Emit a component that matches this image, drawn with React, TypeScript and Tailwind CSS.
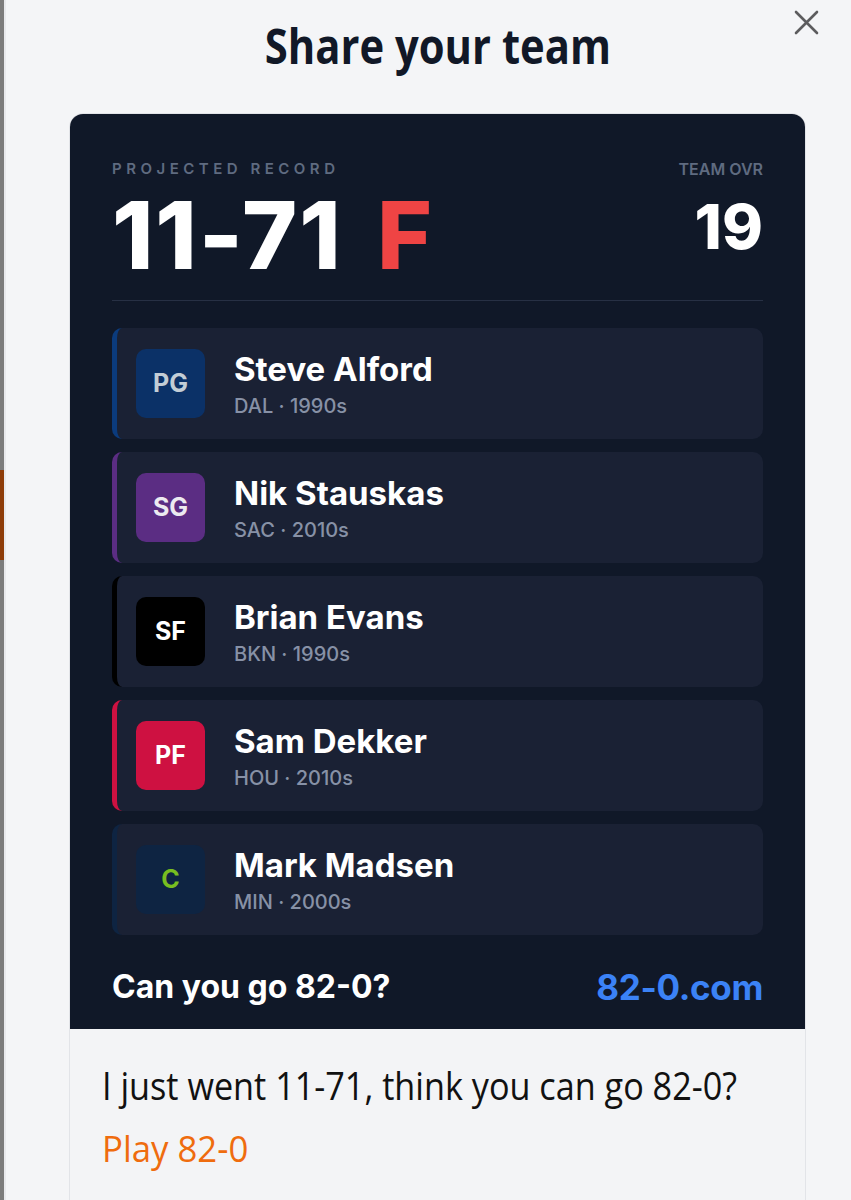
import * as React from "react"

type Player = {
  pos: string
  name: string
  team: string
  era: string
  accent: string
  badge: string
  label: string
}

const roster: Player[] = [
  { pos: "PG", name: "Steve Alford", team: "DAL", era: "1990s", accent: "border-[#0b3b7d]", badge: "bg-[#0b3167]", label: "text-[#c3cdd6]" },
  { pos: "SG", name: "Nik Stauskas", team: "SAC", era: "2010s", accent: "border-[#5b2d83]", badge: "bg-[#5b2d83]", label: "text-[#eceaf0]" },
  { pos: "SF", name: "Brian Evans", team: "BKN", era: "1990s", accent: "border-[#000000]", badge: "bg-[#000000]", label: "text-white" },
  { pos: "PF", name: "Sam Dekker", team: "HOU", era: "2010s", accent: "border-[#ce1141]", badge: "bg-[#ce1141]", label: "text-white" },
  { pos: "C", name: "Mark Madsen", team: "MIN", era: "2000s", accent: "border-[#0e2442]", badge: "bg-[#0e2442]", label: "text-[#78be20]" },
]

const inter = "font-['Inter','Liberation_Sans',sans-serif]"
const body = "font-['Open_Sans','Noto_Sans','Liberation_Sans',sans-serif]"

function PlayerRow({ player }: { player: Player }) {
  return (
    <div
      className={`flex h-[111px] items-center gap-[29px] rounded-[10px] border-l-[5px] bg-[#1a2134] pl-[19px] ${player.accent}`}
    >
      <div
        className={`grid size-[69px] flex-none place-content-center rounded-[10px] text-[25px] font-bold ${player.badge} ${player.label}`}
      >
        {player.pos}
      </div>
      <div className="flex flex-col">
        <div className="text-[33px] font-bold leading-[38px] text-white">
          {player.name}
        </div>
        <div className="mt-[6px] text-[20px] font-medium leading-[24px] text-[#8791a6]">
          {player.team} · {player.era}
        </div>
      </div>
    </div>
  )
}

function ShareCard() {
  return (
    <div className={`bg-[#101828] px-[42px] ${inter}`}>
      <div className="flex items-start justify-between border-b border-[#273044] pb-[26px] pt-[47px]">
        <div>
          <div className="text-[15px] font-semibold leading-none tracking-[0.3em] text-[#5f6b80]">
            PROJECTED RECORD
          </div>
          <div className="mt-[20px] text-[94px] font-extrabold leading-[78px] tracking-[0.02em] text-white">
            11-71 <span className="ml-[12px] text-[#ef4444]">F</span>
          </div>
        </div>
        <div className="flex flex-col items-end">
          <div className="text-[16px] font-semibold leading-none text-[#5f6b80]">
            TEAM OVR
          </div>
          <div className="mt-[22px] text-[62px] font-extrabold leading-[56px] text-white">
            19
          </div>
        </div>
      </div>

      <div className="mt-[27px] flex flex-col gap-[13px]">
        {roster.map((p) => (
          <PlayerRow key={p.pos} player={p} />
        ))}
      </div>

      <div className="flex h-[94px] items-center justify-between pt-[10px]">
        <span className="text-[32px] font-bold text-white">
          Can you go 82-0?
        </span>
        <span className="text-[35px] font-bold tracking-[-0.01em] text-[#3b82f6]">
          82-0.com
        </span>
      </div>
    </div>
  )
}

export default function App() {
  return (
    <div className="flex h-[1200px] w-[851px] overflow-hidden bg-[#f4f5f7]">
      {/* backdrop sliver behind the modal */}
      <div className="w-[4px] flex-none bg-[#7c7c7c]">
        <div className="mt-[470px] h-[90px] bg-[#8e3c08]" />
      </div>

      <div className="relative flex flex-1 flex-col border-l-2 border-[#e8e9ec] pl-[63px]">
        <button className="absolute right-[28px] top-[6px] p-1 text-[#5c5c5e]" aria-label="Close">
          <svg width="25" height="25" viewBox="0 0 25 25" fill="none" stroke="currentColor" strokeWidth="2.6" strokeLinecap="round">
            <path d="M2 2 L23 23 M23 2 L2 23" />
          </svg>
        </button>

        <div className="w-[737px]">
          <div className={`flex h-[113px] items-start justify-center pt-[18px] ${body}`}>
            <h2 className="inline-block scale-x-[0.87] whitespace-nowrap text-[48px] font-bold leading-[56px] text-[#111827]">
              Share your team
            </h2>
          </div>

          <div className="overflow-hidden rounded-t-[14px] border border-[#e2e4e8] bg-[#f3f4f6]">
            <ShareCard />
            <div className={`flex flex-col items-start px-[32px] pb-[40px] pt-[32px] ${body}`}>
              <p className="origin-left scale-x-[0.9] whitespace-nowrap text-[38px] leading-[48px] text-[#111111]">
                I just went 11-71, think you can go 82-0?
              </p>
              <a className="mt-[15px] block origin-left scale-x-[0.94] whitespace-nowrap text-[37px] leading-[48px] text-[#ef6c0e]">
                Play 82-0
              </a>
            </div>
          </div>
        </div>
      </div>
    </div>
  )
}
